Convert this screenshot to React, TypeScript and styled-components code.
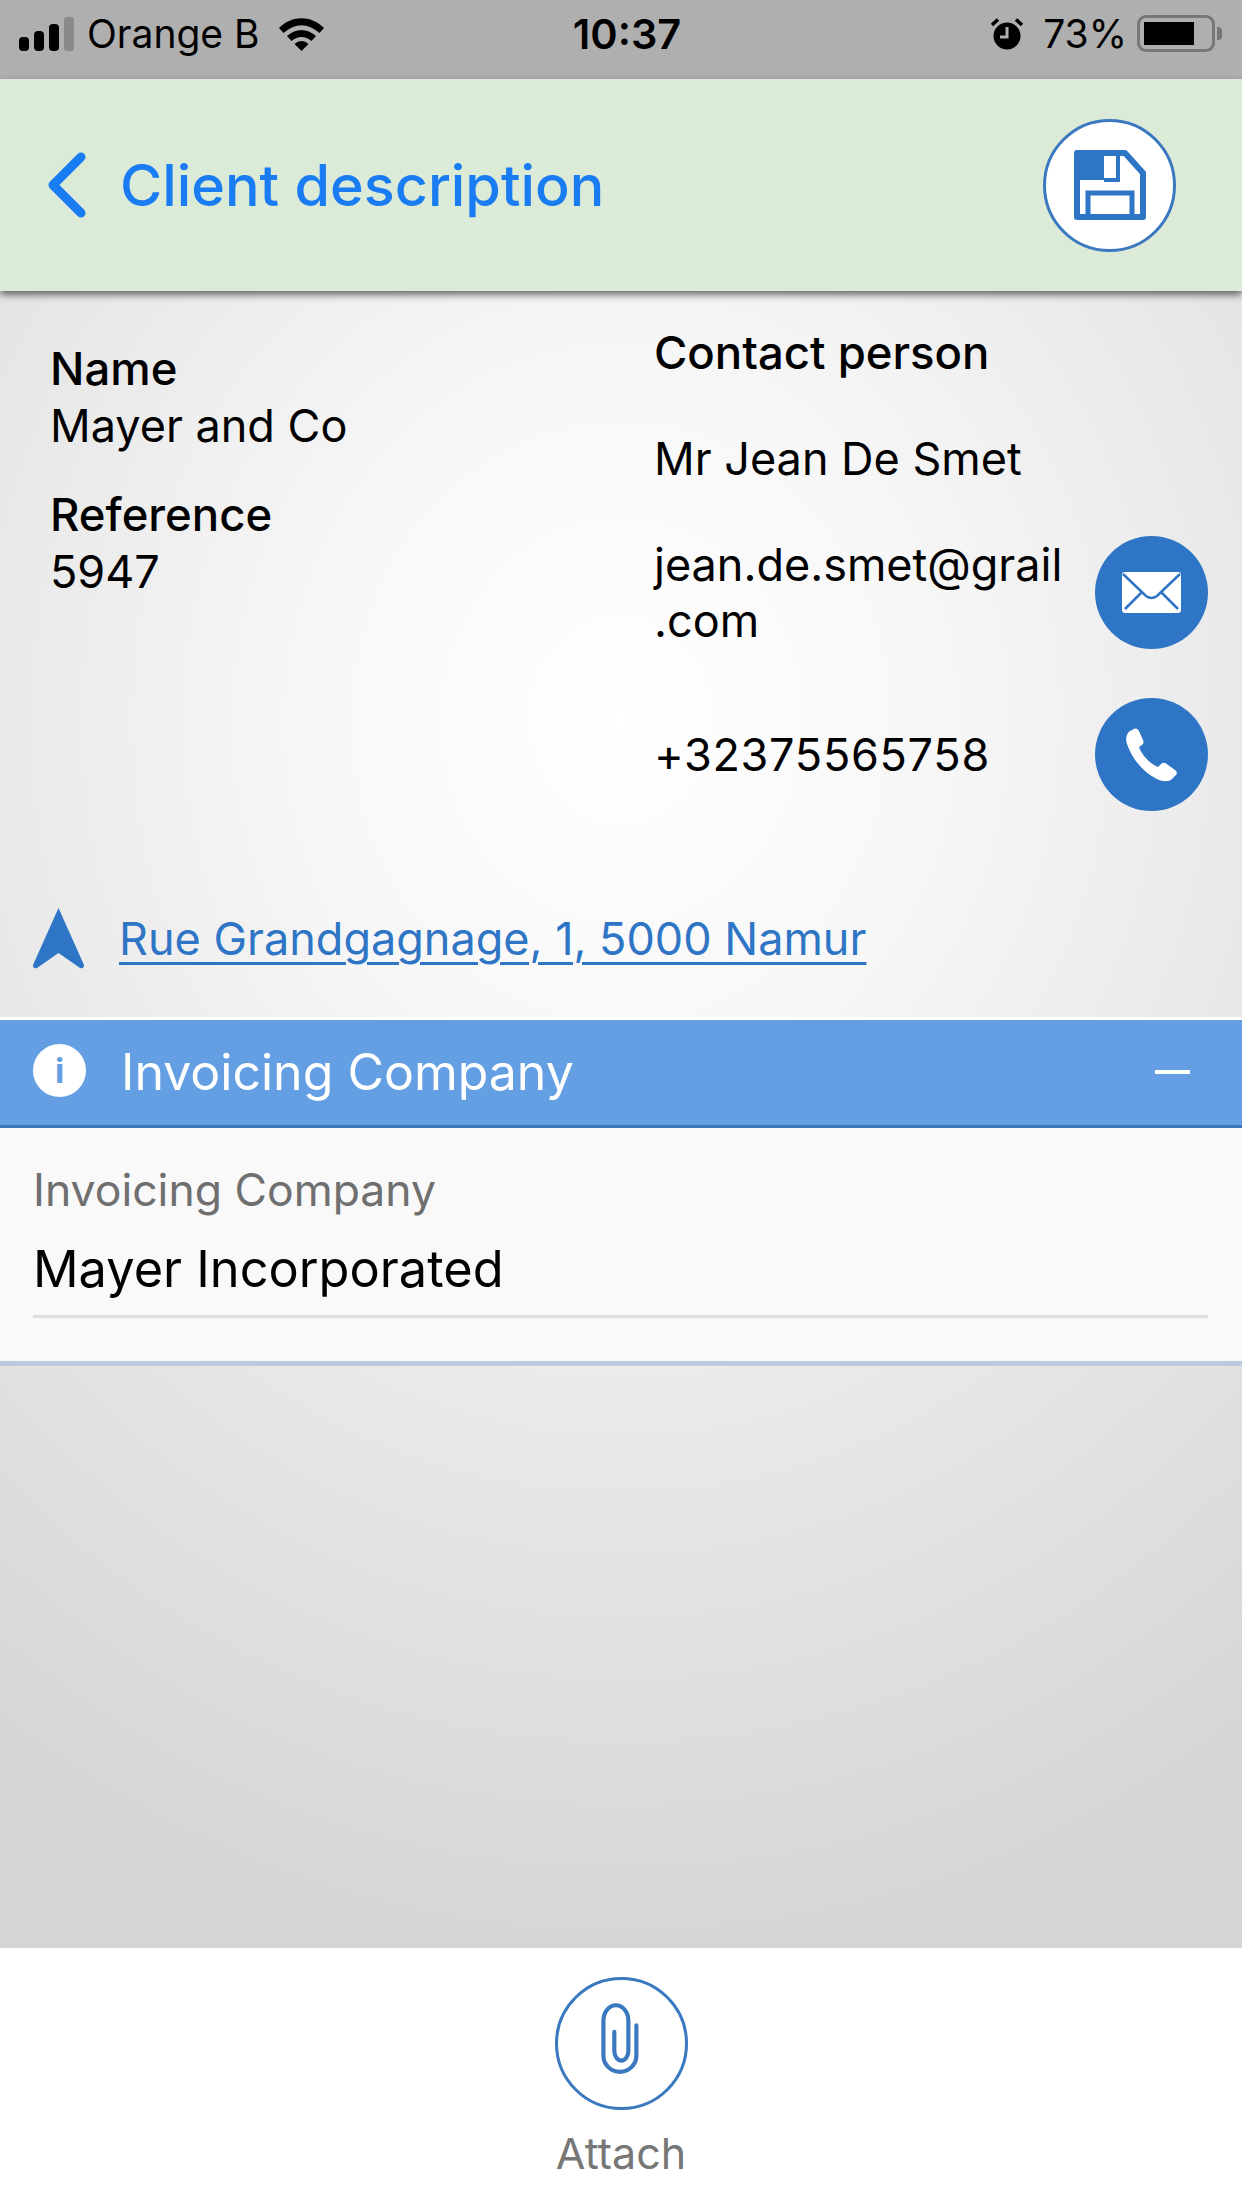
import React from 'react';
import styled, { createGlobalStyle } from 'styled-components';

const GlobalStyle = createGlobalStyle`
    html, body {
        margin: 0;
        padding: 0;
        background: #ffffff;
    }
    * {
        box-sizing: border-box;
    }
`;

const Page = styled.div`
    width: 1242px;
    height: 2208px;
    display: flex;
    flex-direction: column;
    font-family: Inter, "Liberation Sans", sans-serif;
    color: #000000;
    overflow: hidden;
`;

const StatusBar = styled.div`
    height: 79px;
    flex-shrink: 0;
    background: #afafaf;
    display: grid;
    grid-template-columns: 1fr auto 1fr;
    align-items: center;
    padding: 0 27px 12px 19px;
    font-size: 39px;
    line-height: 66px;
`;

const StatusGroup = styled.div<{ $end?: boolean }>`
    display: flex;
    align-items: center;
    justify-content: ${(p) => (p.$end ? 'flex-end' : 'flex-start')};
    height: 66px;
`;

const Carrier = styled.span`
    margin-left: 12px;
    margin-right: 18px;
`;

const Clock = styled.span`
    font-weight: 600;
    font-size: 41.5px;
    height: 66px;
    margin-left: 20px;
`;

const Percent = styled.span`
    margin-left: 20px;
    margin-right: 10px;
`;

const Header = styled.header`
    height: 212px;
    flex-shrink: 0;
    background: #dcead8;
    display: flex;
    align-items: center;
    padding: 0 66px 0 48px;
    position: relative;
    z-index: 1;
    box-shadow: 0 4px 7px rgba(0, 0, 0, 0.55);
`;

const BackLink = styled.div`
    display: flex;
    align-items: center;
    flex: 1;
    color: #1a7cf2;
    font-size: 57.5px;
    font-weight: 500;
    gap: 34px;
`;

const RoundButton = styled.div<{ $size: number }>`
    width: ${(p) => p.$size}px;
    height: ${(p) => p.$size}px;
    border-radius: 50%;
    background: #ffffff;
    border: 3px solid #3a78c0;
    display: flex;
    align-items: center;
    justify-content: center;
    flex-shrink: 0;
`;

const Main = styled.main`
    flex: 1;
    display: flex;
    flex-direction: column;
    background: radial-gradient(ellipse 1120px 1250px at 50% 430px, #ffffff 0%, #f7f7f7 28%, #e6e6e6 62%, #d5d5d5 100%);
`;

const Summary = styled.section`
    display: grid;
    grid-template-columns: 604px 1fr;
    padding: 33px 34px 0 50px;
    font-size: 45px;
    line-height: 57px;
    height: 617px;
`;

const LeftColumn = styled.div`
    display: flex;
    flex-direction: column;
    gap: 32px;
    padding-top: 16px;
`;

const RightColumn = styled.div`
    display: flex;
    flex-direction: column;
    gap: 49px;
`;

const Strong = styled.div`
    font-weight: 500;
    font-size: 45.5px;
`;

const ContactRow = styled.div`
    display: flex;
    align-items: center;
    justify-content: space-between;
`;

const Email = styled.div`
    width: 430px;
    line-height: 56px;
`;

const PhoneNumber = styled.div`
    letter-spacing: 0.7px;
`;

const ActionCircle = styled.div`
    width: 113px;
    height: 113px;
    border-radius: 50%;
    background: #2f75c6;
    display: flex;
    align-items: center;
    justify-content: center;
    flex-shrink: 0;
`;

const Address = styled.div`
    display: flex;
    align-items: center;
    height: 61px;
    padding-left: 33px;
    gap: 35px;
    font-size: 45px;
    color: #2f75c6;
    text-decoration: underline;
    text-underline-offset: 7px;
    text-decoration-thickness: 3px;
`;

const SectionHeader = styled.div`
    margin-top: 48px;
    height: 111px;
    border-top: 3px solid #ffffff;
    border-bottom: 3px solid #3c76b8;
    background: #659fe3;
    color: #ffffff;
    display: flex;
    align-items: center;
    padding: 0 52px 0 33px;
    font-size: 50px;
`;

const InfoBadge = styled.div`
    width: 53px;
    height: 53px;
    border-radius: 50%;
    background: #ffffff;
    color: #659fe3;
    font-size: 34px;
    font-weight: 700;
    display: flex;
    align-items: center;
    justify-content: center;
    margin-right: 35px;
    margin-top: -4px;
`;

const SectionTitle = styled.div`
    flex: 1;
    margin-top: -2px;
`;

const Minus = styled.div`
    width: 35px;
    height: 4px;
    background: #ffffff;
    margin-top: -2px;
`;

const SectionBody = styled.div`
    height: 238px;
    background: #f9f9f9;
    border-bottom: 5px solid #bccadf;
    padding: 33px 34px 0 33px;
`;

const FieldLabel = styled.div`
    font-size: 44.5px;
    line-height: 58px;
    color: #6f6f6f;
`;

const FieldValue = styled.div`
    font-size: 50.5px;
    line-height: 60px;
    margin-top: 20px;
    padding-bottom: 16px;
    border-bottom: 3px solid #dedede;
`;

const Footer = styled.footer`
    height: 260px;
    flex-shrink: 0;
    background: #ffffff;
    display: flex;
    flex-direction: column;
    align-items: center;
    padding-top: 29px;
`;

const FooterLabel = styled.div`
    margin-top: 19px;
    font-size: 43px;
    line-height: 48px;
    color: #777777;
`;

const Battery = styled.div`
    width: 78px;
    height: 37px;
    border: 3px solid #777777;
    border-radius: 9px;
    padding: 4px;
    position: relative;

    &::before {
        content: '';
        display: block;
        width: 50px;
        height: 23px;
        background: #000000;
    }

    &::after {
        content: '';
        position: absolute;
        right: -10px;
        top: 9px;
        width: 5px;
        height: 13px;
        background: #777777;
        border-radius: 0 4px 4px 0;
    }
`;

function SignalIcon() {
    return (
        <svg width="56" height="34" viewBox="0 0 56 34">
            <rect x="0" y="20" width="10" height="14" rx="4" fill="#000" />
            <rect x="15" y="14" width="10" height="20" rx="4" fill="#000" />
            <rect x="30" y="7" width="10" height="27" rx="4" fill="#000" />
            <rect x="45" y="0" width="10" height="34" rx="3" fill="#8a8a8a" />
        </svg>
    );
}

function WifiIcon() {
    return (
        <svg width="47" height="35" viewBox="0 0 47 35">
            <path d="M1 12 C14 -1 33 -1 46 12 L41.5 17 C30 6.5 17 6.5 5.5 17 Z" fill="#000" />
            <path d="M9 20 C18 12 29 12 38 20 L33.5 25 C27 19.5 20 19.5 13.5 25 Z" fill="#000" />
            <path d="M16.5 28 C21 24 26 24 30.5 28 L23.5 35 Z" fill="#000" />
        </svg>
    );
}

function AlarmIcon() {
    return (
        <svg width="32" height="32" viewBox="0 0 32 32">
            <circle cx="16" cy="18" r="13.5" fill="#000" />
            <path d="M16 9 V19 H9" stroke="#afafaf" strokeWidth="3" fill="none" />
            <path d="M1 7 L7 1.5" stroke="#000" strokeWidth="3.5" />
            <path d="M31 7 L25 1.5" stroke="#000" strokeWidth="3.5" />
        </svg>
    );
}

function ChevronIcon() {
    return (
        <svg width="38" height="66" viewBox="0 0 38 66">
            <path d="M33 5 L5 33 L33 61" stroke="#1a7cf2" strokeWidth="9" strokeLinecap="round" strokeLinejoin="round" fill="none" />
        </svg>
    );
}

function SaveIcon() {
    return (
        <svg width="72" height="70" viewBox="0 0 72 70">
            <path d="M3 3 H51 L69 23 V67 H3 Z" fill="#ffffff" stroke="#2f75c6" strokeWidth="6" strokeLinejoin="round" />
            <rect x="3" y="3" width="27" height="27" fill="#2f75c6" />
            <path d="M30 30 H44 V3" stroke="#2f75c6" strokeWidth="4" fill="none" />
            <path d="M14 67 V43 H58 V67" stroke="#2f75c6" strokeWidth="5" fill="none" />
        </svg>
    );
}

function MailIcon() {
    return (
        <svg width="59" height="41" viewBox="0 0 59 41">
            <rect width="59" height="41" rx="3" fill="#ffffff" />
            <path d="M1 2 L24 24 Q29.5 28 35 24 L58 2" stroke="#2f75c6" strokeWidth="2.5" fill="none" />
            <path d="M3 37 L20 20 M56 37 L39 20" stroke="#2f75c6" strokeWidth="2.5" fill="none" />
        </svg>
    );
}

function PhoneIcon() {
    return (
        <svg width="54" height="54" viewBox="0 0 54 54">
            <path
                d="M9 1 C11 0 13 1 14 3 L18 12 C19 14 18.5 16 17 17 L14 19 C16 26 25 36 33 39 L36 36 C37.5 34.5 39.5 34.5 41 35.5 L50 42 C52 43.5 52.5 45.5 51 47 L47 51 C44 54 38 54 32 51 C18 44 7 31 2 16 C0 10 2 5 5 3 Z"
                fill="#ffffff"
            />
        </svg>
    );
}

function NavigationIcon() {
    return (
        <svg width="51" height="61" viewBox="0 0 51 61" style={{ flexShrink: 0 }}>
            <path d="M25.5 0 L51 57 Q51 61 47 60 L25.5 45 L4 60 Q0 61 0 57 Z" fill="#2f75c6" />
        </svg>
    );
}

function ClipIcon() {
    return (
        <svg width="127" height="127" viewBox="250 233 397 397">
            <path
                d="M495 375 V470 a51.5 50 0 0 1 -103 0 V360 a39 48 0 0 1 78 0 V455 a22 30 0 0 1 -44 0 V395"
                stroke="#3a78c0"
                strokeWidth="13"
                strokeLinecap="round"
                fill="none"
            />
        </svg>
    );
}

export default function App() {
    return (
        <Page>
            <GlobalStyle />
            <StatusBar>
                <StatusGroup>
                    <SignalIcon />
                    <Carrier>Orange B</Carrier>
                    <WifiIcon />
                </StatusGroup>
                <Clock>10:37</Clock>
                <StatusGroup $end>
                    <AlarmIcon />
                    <Percent>73%</Percent>
                    <Battery />
                </StatusGroup>
            </StatusBar>
            <Header>
                <BackLink>
                    <ChevronIcon />
                    Client description
                </BackLink>
                <RoundButton $size={133}>
                    <SaveIcon />
                </RoundButton>
            </Header>
            <Main>
                <Summary>
                    <LeftColumn>
                        <div>
                            <Strong>Name</Strong>
                            <div>Mayer and Co</div>
                        </div>
                        <div>
                            <Strong>Reference</Strong>
                            <div>5947</div>
                        </div>
                    </LeftColumn>
                    <RightColumn>
                        <Strong>Contact person</Strong>
                        <div>Mr Jean De Smet</div>
                        <ContactRow>
                            <Email>jean.de.smet@grail<wbr />.com</Email>
                            <ActionCircle>
                                <MailIcon />
                            </ActionCircle>
                        </ContactRow>
                        <ContactRow>
                            <PhoneNumber>+32375565758</PhoneNumber>
                            <ActionCircle>
                                <PhoneIcon />
                            </ActionCircle>
                        </ContactRow>
                    </RightColumn>
                </Summary>
                <Address>
                    <NavigationIcon />
                    Rue Grandgagnage, 1, 5000 Namur
                </Address>
                <SectionHeader>
                    <InfoBadge>i</InfoBadge>
                    <SectionTitle>Invoicing Company</SectionTitle>
                    <Minus />
                </SectionHeader>
                <SectionBody>
                    <FieldLabel>Invoicing Company</FieldLabel>
                    <FieldValue>Mayer Incorporated</FieldValue>
                </SectionBody>
            </Main>
            <Footer>
                <RoundButton $size={133}>
                    <ClipIcon />
                </RoundButton>
                <FooterLabel>Attach</FooterLabel>
            </Footer>
        </Page>
    );
}
